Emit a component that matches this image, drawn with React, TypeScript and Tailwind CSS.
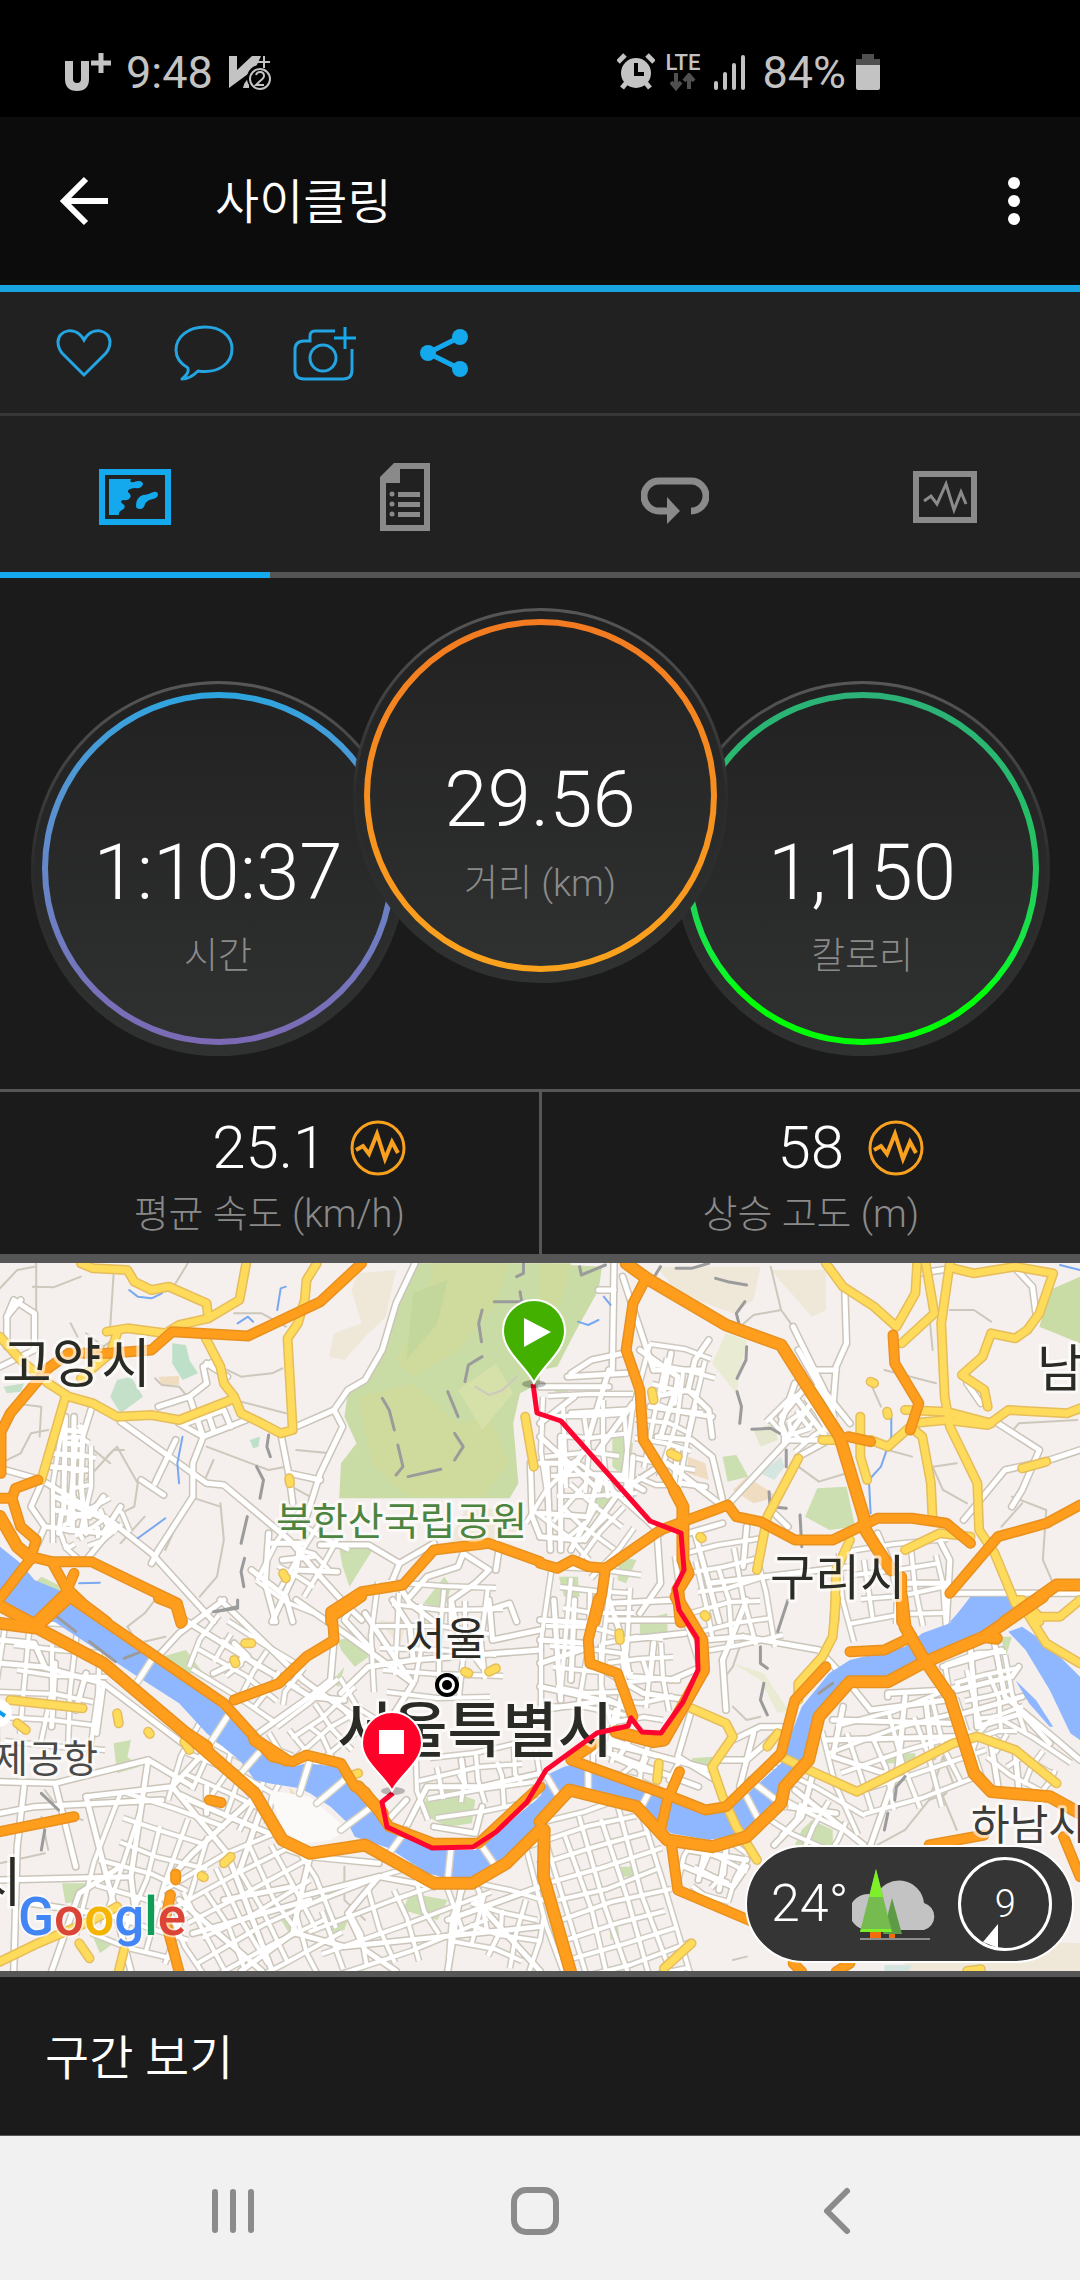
import React from "react";

/* ------------------------------------------------------------------ */
/* Map data                                                            */
/* ------------------------------------------------------------------ */

type Tile = {
  x: number;
  y: number;
  land: [string, string][];
  water: string[];
  island: string[];
  lanes: string[];
  streets: string[];
  bridges: string[];
  arterials: string[];
  highways: string[];
  trunks: string[];
  borders: string[];
  streams: string[];
};

const PARK = "#c9dca6";
const PARK_2 = "#cfdb9c";
const GREEN = "#cbdfb0";
const TAN = "#efe8d9";
const SAND = "#f0dcc0";

const tiles: Tile[] = [
  {
    x: 0,
    y: 1250,
    land: [
      [TAN, "1040,70 1150,60 1120,200 1060,260 1000,330 955,320 970,250 1050,220 1020,120"],
      [PARK, "1205,40 1568,40 1568,400 1510,430 1490,520 1505,700 1480,745 985,745 990,640 1035,580 1000,500 1010,430 1060,400 1110,300 1150,160"],
      [PARK_2, "1260,40 1480,40 1440,160 1330,300 1200,380 1150,330 1230,180"],
      [PARK_2, "1040,440 1200,400 1330,520 1420,500 1480,640 1400,740 1180,740 1080,640"],
      ["#c3d79c", "1200,130 1300,90 1270,220 1180,330"],
      ["#d6e0a9", "1330,420 1440,340 1490,430 1400,540"],
      ["#bfe0c8", "500,280 540,285 550,330 575,370 530,390 500,340"],
      ["#c4e0c9", "340,390 380,380 415,440 350,490 320,440"],
      ["#bfe0c8", "725,570 755,560 750,590 735,595"],
      ["#c4e0c9", "10,410 70,400 60,425 20,430"],
      [SAND, "460,380 520,378 520,405 470,405"],
      [GREEN, "985,895 1085,895 1045,960 1015,1010 995,950"],
      [GREEN, "1290,980 1310,1010 1290,1080 1230,1060"],
      [GREEN, "120,980 180,1010 170,1040 100,1000"],
      [TAN, "1350,780 1510,770 1500,860 1300,880"],
    ],
    water: ["0,890 60,940 100,990 170,1020 240,1060 310,1115 60,1115 0,1050"],
    island: [],
    lanes: [
      "105,40 105,190", "95,110 155,112 235,80", "545,40 510,100", "330,70 320,230",
      "0,115 50,60 100,50", "450,385 470,405 520,410 560,460", "640,350 700,380 790,370 820,355",
      "700,455 830,490", "600,590 780,660 830,650", "310,620 340,590 400,700 390,770 350,790",
      "205,220 225,260", "640,760 650,870 630,980 580,1040", "480,900 550,740 640,770",
      "680,190 760,190 830,230", "860,600 960,610 990,560", "0,640 60,610 90,550 140,540",
      "250,690 330,600 360,600", "1380,410 1420,435 1460,420 1500,380", "620,630 590,700",
      "420,800 350,880", "830,640 830,700 900,740", "40,460 120,470 115,560",
      "250,250 300,290 340,260", "260,590 320,640",
    ],
    streets: [
      "1205,40 1150,160 1110,300 1060,390 1010,420 970,480 860,530", "970,480 995,530 930,670 890,800",
      "350,515 600,700 650,705 840,870 930,980 1000,1060 1050,1110", "520,520 590,560 715,510",
      "590,560 560,640 560,740 460,900", "510,570 450,700", "410,690 475,735",
      "815,550 840,680 850,760", "840,670 930,690", "120,690 330,820 440,910 620,1115",
      "330,830 250,930", "460,900 440,940", "0,655 120,690", "0,350 100,300 100,190 40,150 20,200 20,290",
      "20,200 60,150", "270,460 240,560 235,700", "930,885 1070,885 1160,940 1260,880",
      "1160,940 1140,990", "780,850 770,1000 800,1115", "870,890 860,960 980,965",
      "730,960 830,1040 850,1115", "1160,1010 1190,1060 1260,1115",
      "1190,1040 1240,980 1330,950 1345,910", "1345,910 1420,960 1380,1000 1310,1050 1310,1115",
      "1540,640 1545,800 1568,860", "120,700 90,770 130,830 110,880", "630,330 590,350 600,400 550,440 460,470",
      "550,440 590,560", "540,520 650,480 670,530", "600,480 620,540", "600,340 660,380",
      "880,880 780,880", "820,930 910,920", "860,960 790,1115", "130,830 300,850 350,770",
      "160,780 260,800 300,740", "190,500 185,780", "215,500 210,840", "150,610 240,620", "150,650 250,660",
      "190,540 240,545", "190,580 240,585", "235,700 250,850", "160,740 330,820", "180,780 170,850",
      "1420,1080 1480,1060 1500,1115", "1440,960 1450,890",
    ],
    bridges: [],
    arterials: [
      "235,40 270,55 370,60 390,95 440,120 490,110 600,160 605,205",
      "715,40 695,150 605,205 520,225 480,250 370,235 310,245",
      "920,40 890,90 885,150 865,220 835,265 850,540 815,550 760,520 700,490 680,440 650,400 640,350 605,280 590,250",
      "0,260 60,330 140,400 200,440 270,460 340,500 440,495 520,510 670,450",
      "190,440 120,690", "340,250 320,310", "1525,500 1550,650", "235,385 320,310", "822,970 830,985", "840,685 842,700",
    ],
    highways: [
      "1050,40 930,155 720,258 500,245 440,300 320,310 200,310 140,355 30,490 3,545 3,670",
      "0,745 35,745 45,715 110,690", "35,745 60,830 105,870 90,920",
      "90,920 150,935 265,935 515,1060 530,1115", "90,925 0,1045",
      "150,935 190,1010 240,1060 310,1115", "215,970 190,1030 105,1115", "0,1065 90,1115",
      "960,1115 960,1085 1050,1025 1170,1005 1260,900 1420,880 1568,935",
    ],
    trunks: ["0,800 50,890 90,925"],
    borders: [
      "1110,445 1130,480 1145,540", "1155,585 1170,650 1150,675", "1185,680 1280,658",
      "1400,180 1390,220 1398,275", "1400,320 1360,345 1350,395", "1300,425 1330,500",
      "1320,550 1345,590 1320,630", "1435,155 1515,155 1510,125", "1520,40 1520,70 1500,80",
      "780,555 775,590 785,620", "745,650 765,690 755,745", "718,800 700,880",
      "710,925 700,965 708,1010", "620,1085 690,1075 690,1050",
    ],
    streams: ["375,120 400,140 440,145 470,130", "805,180 815,115 830,110", "530,560 515,640 520,700", "400,865 480,805", "690,220 720,200 735,215", "230,1000 290,998"],
  },
  {
    x: 540,
    y: 1250,
    land: [
      [PARK, "0,40 180,50 170,120 100,250 50,350 0,360"],
      [PARK_2, "0,40 90,40 60,160 0,200"],
      [GREEN, "210,550 270,580 260,690 210,650"],
      [GREEN, "130,740 210,700 200,770 150,800"],
      [GREEN, "530,620 570,615 605,680 545,695"],
      [GREEN, "805,715 890,710 915,830 840,840 770,800"],
      [PARK, "1480,120 1568,80 1568,280 1450,230"],
      [TAN, "340,50 640,50 620,150 560,190 400,130"],
      ["#e9ecd3", "540,250 600,270 570,430 500,340"],
      [TAN, "670,60 830,60 830,180 790,200"],
      [SAND, "600,680 690,740 620,760 560,720"],
      [SAND, "430,620 480,640 490,690 430,670"],
      ["#d5e6e0", "700,620 710,650 680,690 640,670"],
      [GREEN, "230,920 280,930 250,1000 225,990"],
      [GREEN, "55,980 110,980 115,1040 70,1040"],
      ["#e5e6ce", "620,540 680,520 690,570 640,590"],
      [GREEN, "40,420 80,420 80,460"],
    ],
    water: ["1250,1050 1350,1060 1400,1070 1330,1115 1190,1115"],
    island: [],
    lanes: [
      "670,50 700,180 735,230", "700,180 620,195 570,240", "750,650 810,695 890,670",
      "1140,650 1210,640", "1140,650 1170,720 1240,760", "1370,740 1470,780 1460,930 1490,1000",
      "1190,180 1260,180 1310,215", "1130,190 1140,300", "1000,360 1150,400", "960,400 990,470",
      "1560,510 1390,520 1370,545", "1340,830 1400,760", "1010,600 1080,620", "700,520 680,480",
    ],
    streets: [
      "885,120 890,280 860,350 850,480", "735,230 830,430 900,520", "740,400 700,520 720,570 880,570",
      "720,570 540,770", "750,620 830,575", "215,40 210,360", "240,80 330,360", "0,410 200,410",
      "80,380 250,370", "200,360 130,600 60,700", "240,310 150,330 90,370", "490,270 450,330 430,420 330,440",
      "430,420 490,480 500,560", "340,560 440,570 500,620 530,750", "400,600 390,700",
      "0,560 170,720 180,680 250,690 300,720", "0,640 110,640", "60,560 60,900", "20,640 30,900",
      "170,680 140,800 0,790", "200,700 220,740 130,870", "240,720 330,660", "450,850 490,1000 520,1115",
      "600,830 590,950", "490,1000 900,950", "1330,520 1450,600 1400,720 1370,770",
      "1568,600 1480,630 1350,660 1230,810", "1380,55 1430,110 1440,190", "1240,400 1280,460",
      "1160,870 1190,930 1180,1115", "1180,1030 1568,1030", "980,850 1040,1000 1180,1000",
      "170,120 215,120", "750,300 850,480", "780,400 700,500", "800,440 720,560", "740,440 830,560",
      "860,360 800,360", "1100,70 1200,55", "90,490 250,480", "270,460 170,600", "0,520 100,440",
      "290,300 400,380 390,460", "380,310 360,420", "320,470 500,500", "400,400 350,560",
      "450,470 430,560", "330,360 470,360", "370,640 470,720 520,760", "410,700 480,710",
      "270,620 260,760 350,850", "0,860 120,870 190,800", "90,900 130,820", "340,850 350,1000 290,1090",
      "430,850 530,820", "670,780 720,830", "200,1060 400,1050",
    ],
    bridges: [],
    arterials: [
      "830,40 880,110 970,170 1035,230 1090,130 1095,40", "1120,40 1145,190 1050,280",
      "1190,40 1165,220 1175,440 1190,530 1270,700 1275,840 1320,910 1380,1060 1450,1115",
      "1200,55 1260,70 1380,50 1490,70 1450,190 1415,240 1380,265 1310,250 1285,320 1225,375 1290,420 1300,470",
      "1080,520 1180,510 1300,525 1360,480 1530,490 1568,475", "1060,480 1180,485 1310,520",
      "960,570 1010,590 1075,530 1110,560 1135,700 1140,810", "930,500 930,620 950,690",
      "750,625 660,800 630,960", "900,870 860,960 855,1115", "1060,900 1160,850 1250,860",
      "325,425 330,450", "380,610 400,620", "960,395 970,400", "1008,485 1010,495", "820,570 860,570", "1400,655 1470,635",
      "465,860 470,865",
    ],
    highways: [
      "305,90 270,160 250,300 290,420 300,570 390,720",
      "0,940 50,955 95,930 140,950 190,955 350,840 520,775 545,765 570,800 640,815 740,870 850,870 940,825 980,805 1080,805 1180,820 1250,880",
      "190,955 180,1030 160,1115", "1025,255 1030,340 1100,460 1075,540", "895,560 960,575",
      "1190,1030 1330,860 1470,820 1568,765", "1050,980 1050,1115",
    ],
    trunks: [
      "250,40 310,85 540,225 700,285 770,400 870,560 940,800 945,840 975,890 1020,960",
      "390,720 415,770 415,930 430,970 400,1020 410,1115", "1568,1005 1500,1005 1350,1115",
    ],
    borders: [
      "115,50 120,75 190,45", "395,55 440,55 490,40", "510,85 545,95 600,105", "595,155 570,190 580,230",
      "600,290 598,330 572,385", "572,425 585,470 580,520", "615,538 670,535 695,550", "715,600 715,650",
      "755,795 760,890", "350,50 335,75", "665,725 668,770 715,775",
    ],
    streams: ["1020,500 1020,560 990,650 955,690 960,790", "185,140 205,165", "110,215 140,225 170,210", "1510,45 1568,60"],
  },
  {
    x: 0,
    y: 1600,
    land: [
      [GREEN, "980,120 1040,110 1070,170 1030,200 990,150"],
      [GREEN, "470,170 540,150 590,220 530,220"],
      [GREEN, "1240,590 1300,570 1380,600 1370,670 1300,680 1220,640"],
      [GREEN, "330,430 380,420 370,470 405,500 340,520"],
      [GREEN, "180,850 260,850 250,900 190,910"],
      [GREEN, "1190,880 1300,900 1270,960 1170,930"],
      [GREEN, "970,950 1010,960 1000,990 960,1000"],
      [GREEN, "810,950 870,950 840,1000"],
      [GREEN, "270,1010 330,1030 290,1060"],
      [GREEN, "960,250 1000,200 985,260"],
      [GREEN, "1240,0 1290,0 1270,40"],
      [TAN, "1100,60 1180,70 1160,140"],
      [SAND, "840,560 870,600 850,620"],
    ],
    water: [
      "60,0 200,0 250,30 560,240 780,470 850,500 890,490 980,500 1030,570 1060,590 1120,690 1260,750 1380,750 1450,690 1568,590 1568,680 1460,780 1370,830 1300,835 1240,820 1130,745 1030,710 1010,670 960,620 900,580 870,565 780,550 740,540 700,485 600,400 520,310 400,230 150,60",
    ],
    island: ["780,570 900,590 1010,690 960,720 880,730 820,690"],
    lanes: [
      "370,80 420,40 450,0", "370,80 400,130 480,110", "0,790 130,760", "130,570 180,640 240,660",
      "1000,800 1000,900 1060,960", "120,650 140,750",
    ],
    streets: [
      "530,430 300,250 120,200 0,190", "0,545 160,550 430,480 560,560", "0,840 380,830",
      "70,560 50,740 40,1113", "600,450 500,560 250,590", "520,50 900,290 1000,300",
      "640,0 880,240 960,300 1030,350", "860,0 1000,100 1200,250 1120,380",
      "990,280 1070,200 1200,180 1568,150", "1060,40 1190,240", "840,750 900,770 1100,790",
      "1170,700 1240,560 1400,560 1568,520", "1340,480 1350,560", "440,190 520,100 650,0",
      "1030,0 1000,60 1080,150", "750,400 900,290 960,240 970,120", "680,130 720,170 620,220",
      "1200,180 1190,80 1140,0", "1310,0 1330,100 1400,200", "1420,0 1430,120 1568,90",
      "160,190 150,380", "250,220 220,330", "300,250 280,400", "0,120 100,130 130,200",
      "430,480 380,830 400,1000", "250,590 380,1113", "160,550 220,800", "0,640 100,620 470,600",
      "500,560 660,760 790,1113", "640,480 760,620 700,800", "740,590 560,760 480,850",
      "550,600 780,700", "600,640 600,560", "900,770 870,900 850,1000 700,1113",
      "870,890 1100,830 1260,860", "1100,830 1010,940 1060,1050 1150,1113",
      "1340,860 1300,1113", "1300,960 1568,860", "860,1000 1000,1040 1568,980", "520,900 760,1113",
      "650,900 850,860", "560,1000 900,900", "1380,900 1568,1113", "1180,600 1090,700",
      "1260,680 1380,700 1400,620", "90,910 400,960", "150,1113 230,880 350,800",
    ],
    bridges: [
      "440,180 390,260", "660,350 610,430", "750,460 700,520", "900,480 870,580", "1000,540 920,610",
      "1080,620 990,690", "1180,690 1130,760", "1310,740 1300,840", "1400,740 1440,800",
    ],
    arterials: [
      "30,300 240,325", "0,1085 110,1030 270,960 340,920", "230,1030 260,1075", "360,1050 345,1113",
      "535,425 550,450", "340,340 345,370", "712,130 730,130", "650,790 670,770", "1350,215 1360,220",
      "1420,215 1440,205", "1010,530 1040,520", "50,370 75,390", "680,180 684,190", "430,395 435,402", "585,828 592,832",
    ],
    highways: [
      "1050,-10 965,50 970,120 890,170 810,250 680,300", "460,-5 510,15 525,70", "0,695 215,650",
      "608,600 642,608", "510,822 510,840", "495,885 480,960 520,1115", "0,20 110,80 205,-10",
      "200,-10 650,310 790,470 850,485 890,465 990,490 1030,560 1060,575 1130,680 1260,730 1390,730 1520,605 1568,560",
    ],
    trunks: [
      "0,70 110,85 300,190 540,400 740,580 820,720 900,760 1060,735 1260,850 1370,850 1470,790 1568,690",
      "540,400 600,440", "740,420 830,480", "1040,560 1110,640",
    ],
    borders: ["165,50 220,95", "260,125 335,185", "360,175 410,155", "120,580 170,630", "625,35 690,20", "130,690 120,750"],
    streams: [],
  },
  {
    x: 540,
    y: 1600,
    land: [
      [GREEN, "740,735 760,690 790,660 850,690 850,735"],
      [GREEN, "1000,460 1090,460 1090,490 1000,490"],
      [GREEN, "235,800 270,800 275,830 240,830"],
      [GREEN, "440,475 500,470 500,505 450,510"],
      [GREEN, "1340,110 1370,110 1350,180"],
      [GREEN, "290,60 370,40 370,120 290,110"],
      [GREEN, "1070,370 1110,370 1100,400"],
      [GREEN, "200,970 225,970 230,1010 205,1020"],
      ["#e9ecd3", "560,190 650,220 720,330 690,340 640,240"],
      [TAN, "1060,1060 1300,1020 1568,1030 1568,1115 1060,1115"],
      ["#d5e6e0", "1000,1095 1080,1095 1070,1115 1000,1115"],
    ],
    water: [
      "0,590 30,520 70,500 110,490 380,600 480,640 550,630 700,490 730,400 760,320 840,220 900,180 1060,140 1110,100 1190,70 1250,-10 1390,-10 1340,60 1280,100 1110,180 1010,230 900,230 820,320 780,460 700,560 690,610 600,700 490,720 380,700 280,610 80,560 0,640",
      "1360,95 1400,80 1470,130 1568,230 1568,420 1540,400 1480,270 1410,150",
      "1380,240 1440,300 1490,380 1480,380 1420,310",
    ],
    island: [],
    lanes: [
      "1170,470 1130,600 1060,690", "1170,470 1200,550 1170,590 1210,690", "560,320 600,360 640,350",
      "530,240 560,200 590,110", "1060,690 980,735", "1130,600 1180,580",
      "560,1080 600,1070",
    ],
    streets: [
      "590,110 810,150 890,240 960,330", "530,180 540,330", "600,0 530,180", "470,120 590,110",
      "960,330 1180,300", "880,320 850,470 1000,520", "1060,290 1040,500 960,735", "1120,300 1140,470",
      "1010,290 1010,280 1180,270", "850,360 1190,370", "830,420 1200,410", "790,530 760,650 680,735",
      "740,570 940,735", "720,620 860,640", "1170,200 1340,150", "1210,270 1370,230 1390,200",
      "1230,340 1400,290", "1250,150 1270,380", "1320,130 1350,290 1500,420 1568,480",
      "1310,430 1330,560", "1380,450 1390,570", "1270,380 1400,340 1480,430", "0,60 150,70",
      "0,120 130,130", "0,190 120,150", "0,260 220,310", "40,0 60,300", "100,0 90,240", "0,330 200,300 260,330",
      "200,0 240,120 420,100", "240,120 260,230 400,240", "200,60 400,60", "330,130 320,230",
      "150,190 300,280 430,300", "220,330 200,460 460,560", "270,400 230,470", "320,420 290,510",
      "440,330 400,470 510,540", "200,430 500,510", "560,420 640,380 700,380", "520,480 600,480 690,400",
      "620,400 580,560", "380,240 470,200", "430,750 600,780", "420,800 560,860 600,800",
      "480,750 460,840", "540,750 520,870",
    ],
    bridges: ["140,510 140,570", "20,530 60,600", "320,570 290,630", "610,540 710,620", "600,590 630,650"],
    arterials: [
      "860,-5 850,110 820,170 750,250 750,300", "440,325 540,370 560,410 500,500 530,590 570,680 630,780",
      "700,470 780,510 920,575 1010,530 1200,430 1270,410 1380,450 1500,550", "1390,0 1470,130 1568,190",
      "1400,0 1450,50 1510,50 1568,0", "690,400 660,440", "345,490 340,540", "440,1030 360,1105",
      "230,100 232,120", "478,45 482,50", "1240,1113 1280,1108",
    ],
    highways: [
      "170,-5 140,120 145,190 225,220 270,350", "405,515 370,600 350,690", "380,720 400,870 640,975",
      "900,155 1000,150 1080,110", "90,480 370,585 480,630 540,620 700,460 740,300 830,200",
      "1130,735 1290,705", "1520,710 1568,830", "735,1090 760,1115", "860,1115 900,1090", "90,480 160,430",
    ],
    trunks: [
      "395,-10 470,120 475,210 360,420 330,425 220,395",
      "0,665 85,570 280,620 370,720 500,740 600,710 700,610 710,560 780,480 810,350 900,245 1010,245 1110,190 1290,110 1460,-10",
      "1290,110 1325,115", "1050,-10 1060,80 1110,170 1190,290 1260,520 1310,575 1480,590 1568,640",
      "12,690 10,830 90,1120",
    ],
    borders: ["640,140 640,190 660,205", "650,250 640,300 660,345", "720,0 690,95", "1060,530 1035,560 1030,600", "1010,640 1000,690", "810,280 850,250"],
    streams: [],
  },
];

/* Blocks of narrow streets: centre, size, turn in degrees, spacing. */
type Block = [number, number, number, number, number, number];
const blocks: Block[] = [
  [612, 1905, 130, 200, -17, 20],
  [75, 1485, 36, 120, 6, 15],
  [95, 1530, 60, 40, -32, 15],
  [255, 1910, 150, 120, -28, 20],
  [150, 1880, 110, 150, 18, 24],
  [235, 1780, 110, 90, 24, 20],
  [55, 1690, 110, 130, 5, 24],
  [400, 1920, 190, 90, -20, 25],
  [500, 1930, 90, 80, 14, 21],
  [330, 1730, 100, 70, -38, 18],
  [250, 1670, 110, 60, 32, 20],
  [440, 1640, 130, 110, 3, 22],
  [590, 1645, 90, 150, 5, 20],
  [480, 1780, 120, 60, -10, 20],
  [640, 1680, 70, 80, -6, 20],
  [590, 1450, 90, 110, -2, 20],
  [670, 1420, 70, 140, 12, 19],
  [585, 1520, 90, 80, 40, 22],
  [730, 1600, 90, 110, -12, 20],
  [640, 1770, 90, 40, 18, 16],
  [803, 1422, 46, 60, 55, 14],
  [910, 1760, 150, 110, -18, 23],
  [990, 1700, 70, 90, -14, 20],
  [1020, 1760, 90, 50, 32, 20],
  [900, 1590, 110, 90, -8, 24],
  [800, 1820, 110, 70, 28, 24],
  [715, 1870, 60, 60, 24, 18],
  [310, 1560, 90, 70, -60, 24],
];

function blockLines([cx, cy, w, h, turn, gap]: Block): string[] {
  const rad = (turn * Math.PI) / 180;
  const c = Math.cos(rad);
  const s = Math.sin(rad);
  const at = (u: number, v: number) =>
    `${Math.round(cx + u * c - v * s)},${Math.round(cy + u * s + v * c)}`;
  const out: string[] = [];
  let i = 0;
  for (let u = -w / 2; u <= w / 2; u += gap) {
    const k = (i * 7) % 5;
    out.push(`${at(u, -h / 2 + k * 5)} ${at(u + k * 2 - 4, 0)} ${at(u + 2 - k, h / 2 - ((i * 3) % 4) * 6)}`);
    i += 1;
  }
  for (let v = -h / 2; v <= h / 2; v += gap) {
    const k = (i * 5) % 4;
    out.push(`${at(-w / 2 + k * 5, v)} ${at(0, v + k * 2 - 3)} ${at(w / 2 - ((i * 3) % 5) * 4, v + 2 - k)}`);
    i += 1;
  }
  return out;
}

const blockPaths = blocks.flatMap(blockLines);

const ROUTE =
  "533,1384 537,1413 561,1421 650,1521 681,1533 684,1570 675,1588 679,1610 697,1638 698,1670 683,1702 661,1733 642,1732 631,1718 628,1726 597,1733 546,1770 527,1802 496,1832 473,1847 432,1848 387,1827 382,1802 393,1793";

type LineKey = "lanes" | "streets" | "bridges" | "arterials" | "highways" | "trunks" | "borders" | "streams";

function Lines({ kind, color, width }: { kind: LineKey; color: string; width: number }) {
  return (
    <g fill="none" stroke={color} strokeWidth={width} strokeLinecap="round" strokeLinejoin="round">
      {tiles.map((t) => (
        <g key={`${t.x}-${t.y}`} transform={`translate(${t.x} ${t.y}) scale(0.3444 0.3333)`}>
          {t[kind].map((p) => (
            <polyline key={p} points={p} vectorEffect="non-scaling-stroke" />
          ))}
        </g>
      ))}
    </g>
  );
}

function Areas({ pick }: { pick: (t: Tile) => [string, string][] }) {
  return (
    <g>
      {tiles.map((t) => (
        <g key={`${t.x}-${t.y}`} transform={`translate(${t.x} ${t.y}) scale(0.3444 0.3333)`}>
          {pick(t).map(([fill, p]) => (
            <polygon key={p} points={p} fill={fill} />
          ))}
        </g>
      ))}
    </g>
  );
}

function Place({
  x,
  y,
  size,
  weight = 400,
  color = "#2b2b26",
  halo = 6,
  children,
}: {
  x: number;
  y: number;
  size: number;
  weight?: number;
  color?: string;
  halo?: number;
  children: string;
}) {
  return (
    <text
      x={x}
      y={y}
      fontSize={size}
      fontWeight={weight}
      fill={color}
      stroke="#ffffff"
      strokeOpacity={0.65}
      strokeWidth={halo}
      strokeLinejoin="round"
      paintOrder="stroke"
    >
      {children}
    </text>
  );
}

function RouteMap() {
  return (
    <svg viewBox="0 1263 1080 708" className="block h-auto w-full font-['Noto_Sans_CJK_KR',sans-serif]" role="img" aria-label="서울 라이딩 경로 지도">
      <rect x="0" y="1263" width="1080" height="708" fill="#f5efee" />
      <Areas pick={(t) => t.land} />
      <Lines kind="lanes" color="#cdc8bc" width={2} />
      <g fill="none" stroke="#cfcabf" strokeWidth="7" strokeLinejoin="round">
        {blockPaths.map((p, i) => (
          <polyline key={i} points={p} />
        ))}
      </g>
      <Lines kind="streets" color="#cbc5b9" width={8} />
      <g fill="none" stroke="#ffffff" strokeWidth="4" strokeLinejoin="round">
        {blockPaths.map((p, i) => (
          <polyline key={i} points={p} />
        ))}
      </g>
      <Lines kind="streets" color="#ffffff" width={5} />
      <Areas pick={(t) => t.water.map((p): [string, string] => ["#8fb7ff", p])} />
      <Areas pick={(t) => t.island.map((p): [string, string] => ["#fbfaf8", p])} />
      <Lines kind="streams" color="#78a9f0" width={2} />
      <Lines kind="borders" color="#9b9b9b" width={3} />
      <Lines kind="bridges" color="#d5d0c4" width={8} />
      <Lines kind="bridges" color="#ffffff" width={5} />
      <Lines kind="arterials" color="#e6bd5b" width={10} />
      <Lines kind="arterials" color="#ffdb5c" width={7} />
      <Lines kind="highways" color="#e8911f" width={11} />
      <Lines kind="trunks" color="#e8911f" width={13} />
      <Lines kind="highways" color="#ff9d1c" width={8} />
      <Lines kind="trunks" color="#ff9d1c" width={10} />

      <circle cx="-2" cy="1713" r="14" fill="#ffffff" />
      <path d="M-4 1710 L5 1716" stroke="#0d9bf0" strokeWidth="4" fill="none" />

      <Place x={2} y={1383} size={54}>고양시</Place>
      <Place x={1037} y={1387} size={51}>남</Place>
      <Place x={276} y={1535} size={39} color="#4c8440">북한산국립공원</Place>
      <Place x={770} y={1595} size={49}>구리시</Place>
      <Place x={405} y={1655} size={44}>서울</Place>
      <Place x={337} y={1752} size={60} weight={500}>서울특별시</Place>
      <Place x={-7} y={1772} size={38} color="#4a4a48">제공항</Place>
      <Place x={-28} y={1902} size={54}>시</Place>
      <Place x={971} y={1840} size={42} color="#3c3c38">하남시</Place>

      <circle cx="447" cy="1685" r="10" fill="#ffffff" stroke="#000000" strokeWidth="4" />
      <circle cx="447" cy="1685" r="5" fill="#000000" />

      <polyline points={ROUTE} fill="none" stroke="#fe0531" strokeWidth="5" strokeLinejoin="round" />

      <ellipse cx="534" cy="1384" rx="12" ry="4" fill="#000000" opacity="0.25" />
      <path
        d="M534 1383 C526 1366 503 1352 503 1331 A31 31 0 0 1 565 1331 C565 1352 542 1366 534 1383Z"
        fill="#43b000"
        stroke="#ffffff"
        strokeWidth="2"
      />
      <path d="M524 1318 L551 1332 L524 1347Z" fill="#ffffff" />

      <ellipse cx="393" cy="1791" rx="12" ry="4" fill="#000000" opacity="0.25" />
      <path
        d="M392 1791 C384 1775 362 1762 362 1743 A30 31 0 0 1 422 1743 C422 1762 400 1775 392 1791Z"
        fill="#fe0129"
        stroke="#ffffff"
        strokeWidth="2"
      />
      <rect x="379" y="1730" width="25" height="24" fill="#ffffff" />

      <text
        x="18"
        y="1935"
        fontSize="53"
        fontWeight="500"
        className="font-['Roboto',sans-serif]"
        stroke="#ffffff"
        strokeOpacity="0.6"
        strokeWidth="4"
        paintOrder="stroke"
      >
        <tspan fill="#4285f4">G</tspan>
        <tspan fill="#db4437">o</tspan>
        <tspan fill="#f4b400">o</tspan>
        <tspan fill="#4285f4">g</tspan>
        <tspan fill="#0f9d58">l</tspan>
        <tspan fill="#db4437">e</tspan>
      </text>
    </svg>
  );
}

/* ------------------------------------------------------------------ */
/* Status bar                                                          */
/* ------------------------------------------------------------------ */

function StatusBar() {
  return (
    <div className="flex h-[117px] items-center justify-between bg-black pt-[27px] pr-[200px] pl-16 text-[#c3c3c3]">
      <div className="flex items-center">
        <svg width="48" height="40" viewBox="0 0 48 40" aria-label="U+" role="img">
          <path d="M5 9 V27 Q5 35 13 35 Q21 35 21 27 V9" fill="none" stroke="currentColor" strokeWidth="8" />
          <path d="M27 11 H47 M37 1 V21" stroke="currentColor" strokeWidth="5" />
        </svg>
        <span className="ml-3.5 text-[45px] leading-none">9:48</span>
        <svg className="ml-4" width="44" height="40" viewBox="0 0 44 40" aria-hidden="true">
          <path d="M0 4 H8 V18 L23 4 H32 L27 15 L19 22 L0 36Z" fill="currentColor" />
          <path d="M14 36 Q15 30 20 26 V36Z" fill="currentColor" />
          <circle cx="31" cy="26" r="13" fill="#000" />
          <circle cx="31" cy="27" r="10" fill="none" stroke="currentColor" strokeWidth="2" />
          <path d="M27 23 Q28 20 31 20 Q35 20 35 24 Q35 26 31 29 L27 33 H35" fill="none" stroke="currentColor" strokeWidth="2" />
          <path d="M29 10 H41 M35 4 V16" stroke="currentColor" strokeWidth="2" />
        </svg>
      </div>
      <div className="flex items-center">
        <svg width="38" height="38" viewBox="0 0 38 38" aria-hidden="true">
          <path d="M1 9 L8 2 M37 9 L30 2" stroke="currentColor" strokeWidth="5" />
          <path d="M10 29 L5 35 M28 29 L33 35" stroke="currentColor" strokeWidth="5" />
          <circle cx="19" cy="20" r="15" fill="currentColor" />
          <path d="M19 10 V21 H27" stroke="#000" strokeWidth="4" fill="none" />
        </svg>
        <div className="ml-2.5 flex flex-col items-center">
          <span className="text-[22px] leading-5 font-medium">LTE</span>
          <svg width="26" height="18" viewBox="0 0 26 18" aria-hidden="true">
            <path d="M6 0 V14 M1 9 L6 15 L11 9" fill="none" stroke="#505050" strokeWidth="4" />
            <path d="M19 16 V3 M14 8 L19 2 L24 8" fill="none" stroke="#505050" strokeWidth="4" />
          </svg>
        </div>
        <svg className="ml-3.5" width="32" height="36" viewBox="0 0 32 36" aria-hidden="true">
          <path d="M2 29 V34 M11 20 V34 M20 11 V34 M29 3 V34" stroke="currentColor" strokeWidth="4" strokeLinecap="round" />
        </svg>
        <span className="ml-4 text-[45px] leading-none">84%</span>
        <svg className="ml-2.5" width="24" height="38" viewBox="0 0 24 38" aria-hidden="true">
          <path d="M6 1 H18 V6 H24 V12 H0 V6 H6Z" fill="#4f4f4f" />
          <path d="M0 12 H24 V35 Q24 37 22 37 H2 Q0 37 0 35Z" fill="currentColor" />
        </svg>
      </div>
    </div>
  );
}

/* ------------------------------------------------------------------ */
/* Action and tab icons                                                */
/* ------------------------------------------------------------------ */

function HeartIcon() {
  return (
    <svg width="56" height="50" viewBox="0 0 56 50" aria-hidden="true">
      <path
        d="M28 47 L6 25 Q2 20 2 14 C2 2 20 -3 28 12 C36 -3 54 2 54 14 Q54 20 50 25Z"
        fill="none"
        stroke="#24a4e0"
        strokeWidth="3"
      />
    </svg>
  );
}

function CommentIcon() {
  return (
    <svg width="60" height="56" viewBox="0 0 60 56" aria-hidden="true">
      <path
        d="M24 46 C45 49 58 38 58 24 C58 10 46 2 31 2 C14 2 2 12 2 25 C2 33 7 39 14 43 C15 47 12 51 8 54 C14 54 19 51 24 46Z"
        fill="none"
        stroke="#24a4e0"
        strokeWidth="3"
        strokeLinejoin="round"
      />
    </svg>
  );
}

function CameraIcon() {
  return (
    <svg width="64" height="56" viewBox="-1 -1 64 56" aria-hidden="true" fill="none" stroke="#24a4e0" strokeWidth="3">
      <path d="M42 5 H22 Q17 5 17 10 V15 H11 Q2 15 2 24 V44 Q2 53 11 53 H50 Q59 53 59 44 V23" />
      <circle cx="30" cy="32" r="13" />
      <path d="M41 12 H63 M52 1 V23" stroke="#14a8ec" />
    </svg>
  );
}

function ShareIcon() {
  return (
    <svg width="48" height="48" viewBox="0 0 48 48" aria-hidden="true" fill="#14a8ec">
      <path d="M8 24 L40 8 M8 24 L40 40" stroke="#14a8ec" strokeWidth="5" />
      <circle cx="8" cy="24" r="8" />
      <circle cx="40" cy="8" r="8" />
      <circle cx="40" cy="40" r="8" />
    </svg>
  );
}

function MapTabIcon() {
  return (
    <svg width="72" height="56" viewBox="0 0 72 56" aria-hidden="true">
      <rect x="3" y="3" width="66" height="50" fill="none" stroke="currentColor" strokeWidth="6" />
      <path
        d="M10 10 H32 Q30 14 35 13 Q43 10 44 15 Q43 20 36 19 Q28 20 29 23 Q33 26 31 29 Q29 32 24 31 Q20 32 24 35 Q28 38 23 41 Q19 43 20 46 H10Z"
        fill="currentColor"
      />
      <path
        d="M37 37 Q37 28 44 26 Q48 26 52 24 Q58 21 59 25 Q59 29 54 30 Q48 31 46 35 Q45 40 41 40 Q37 40 37 37Z"
        fill="currentColor"
      />
    </svg>
  );
}

function DetailTabIcon() {
  return (
    <svg width="50" height="68" viewBox="0 0 50 68" aria-hidden="true" fill="currentColor">
      <path d="M14 0 H50 V68 H0 V14Z M20 6 V20 H6 V62 H44 V6Z" fillRule="evenodd" />
      <circle cx="12" cy="31" r="2.5" />
      <circle cx="12" cy="41" r="2.5" />
      <circle cx="12" cy="51" r="2.5" />
      <path d="M18 29 H40 V34 H18Z M18 39 H40 V44 H18Z M18 49 H40 V54 H18Z" />
    </svg>
  );
}

function LapTabIcon() {
  return (
    <svg width="68" height="56" viewBox="0 -8 68 56" aria-hidden="true">
      <path d="M26 34 H18 A15 15 0 0 1 18 4 H50 A15 15 0 0 1 50 34" fill="none" stroke="currentColor" strokeWidth="7" />
      <path d="M26 20 L39 34 L26 47Z" fill="currentColor" />
    </svg>
  );
}

function ChartTabIcon() {
  return (
    <svg width="64" height="52" viewBox="0 0 64 52" aria-hidden="true" fill="none" stroke="currentColor">
      <rect x="3" y="3" width="58" height="46" strokeWidth="6" />
      <path d="M11 30 L18 25 L24 33 L33 13 L41 39 L48 21 L53 33" strokeWidth="3" strokeMiterlimit="10" />
    </svg>
  );
}

function PulseIcon() {
  return (
    <svg width="56" height="56" viewBox="0 0 56 56" aria-hidden="true" fill="none" stroke="#f9a11f">
      <circle cx="28" cy="28" r="26" strokeWidth="3" />
      <path d="M6 30 L13 26 L19 34 L27 14 L35 39 L42 22 L48 33" strokeWidth="4" strokeMiterlimit="10" />
    </svg>
  );
}

/* ------------------------------------------------------------------ */
/* Activity page                                                       */
/* ------------------------------------------------------------------ */

const actions = [
  { label: "좋아요", icon: <HeartIcon /> },
  { label: "댓글", icon: <CommentIcon /> },
  { label: "사진 추가", icon: <CameraIcon /> },
  { label: "공유", icon: <ShareIcon /> },
];

const tabs = [
  { label: "요약", icon: <MapTabIcon />, active: true },
  { label: "상세정보", icon: <DetailTabIcon />, active: false },
  { label: "랩", icon: <LapTabIcon />, active: false },
  { label: "차트", icon: <ChartTabIcon />, active: false },
];

function Gauge({ value, label, ring, className }: { value: string; label: string; ring: string; className: string }) {
  return (
    <div className={`size-[375px] shrink-0 rounded-full bg-linear-to-b from-[#575757] via-[#2b2b2b] to-[#303131] p-[3px] ${className}`}>
      <div className="size-full rounded-full bg-linear-to-b from-[#202020] to-[#303231] p-2">
        <div className={`size-full rounded-full bg-linear-to-b p-1.5 ${ring}`}>
          <div className="flex size-full flex-col items-center rounded-full bg-linear-to-b from-[#222222] to-[#2f3130] pt-[135px]">
            <span className="text-[78px] leading-[80px] font-light whitespace-nowrap text-white">{value}</span>
            <span className="mt-5 text-[37px] leading-[48px] font-light whitespace-nowrap text-[#8a8a8a]">{label}</span>
          </div>
        </div>
      </div>
    </div>
  );
}

function Metric({ value, label }: { value: string; label: string }) {
  return (
    <div className="flex flex-1 flex-col items-center pt-6">
      <div className="grid w-full grid-cols-[1fr_auto_1fr] items-center gap-x-6">
        <span className="col-start-2 text-[60px] leading-[64px] font-light text-white">{value}</span>
        <button type="button" aria-label={`${label} 차트`} className="justify-self-start">
          <PulseIcon />
        </button>
      </div>
      <span className="mt-2.5 text-[38px] leading-[48px] font-light text-[#8a8a8a]">{label}</span>
    </div>
  );
}

function Weather() {
  return (
    <div className="absolute right-1.5 bottom-2 flex h-[118px] w-[329px] items-center rounded-full border-2 border-white bg-[#353535] pl-6 text-white">
      <span className="text-[52px] leading-none font-light">24°</span>
      <svg className="ml-1" width="86" height="74" viewBox="0 0 86 74" aria-hidden="true">
        <path d="M16 63 A18 18 0 1 1 24 29 A25 25 0 0 1 72 36 A14 14 0 0 1 72 63Z" fill="#c3c3c3" />
        <path d="M8 72 H78" stroke="#8d8d8d" strokeWidth="2" />
        <path d="M18 64 H29 V71 H18Z M37 66 H43 V71 H37Z" fill="#f26c0d" />
        <path d="M40 31 L50 67 H31Z" fill="#5d9b47" />
        <path d="M24 2 L40 65 H8Z" fill="#76bb4f" />
        <path d="M24 2 L31 30 H17Z" fill="#7df02a" />
        <path d="M9 62 L8 65 H40 L39 62Z" fill="#7df02a" />
      </svg>
      <div className="relative ml-5 flex size-[94px] items-center justify-center rounded-full border-[3px] border-white">
        <span className="text-[38px] leading-none font-light">9</span>
        <svg className="absolute bottom-0 left-[22px]" width="16" height="24" viewBox="0 0 16 24" aria-hidden="true">
          <path d="M15 0 V24 L0 18Z" fill="#ffffff" />
        </svg>
      </div>
    </div>
  );
}

export default function App() {
  return (
    <div className="flex min-h-screen flex-col bg-[#1b1b1b] font-['Roboto','Noto_Sans_CJK_KR',sans-serif]">
      <StatusBar />

      <header className="flex h-[168px] items-center bg-[#0c0c0c] pr-12 pl-[60px] text-white">
        <button type="button" aria-label="뒤로">
          <svg width="48" height="50" viewBox="0 0 48 50" aria-hidden="true">
            <path d="M26 3 L4 25 L26 47 M4 25 H48" fill="none" stroke="currentColor" strokeWidth="6" />
          </svg>
        </button>
        <h1 className="ml-[107px] flex-1 pt-1 text-[48px] leading-none font-[350]">사이클링</h1>
        <button type="button" aria-label="메뉴" className="flex w-9 flex-col items-center gap-1.5">
          <span className="size-3 rounded-full bg-white" />
          <span className="size-3 rounded-full bg-white" />
          <span className="size-3 rounded-full bg-white" />
        </button>
      </header>

      <div className="flex h-[131px] items-center border-t-[7px] border-b-[3px] border-t-[#1aa3e1] border-b-[#373737] bg-[#212121] pl-6">
        {actions.map((a) => (
          <button key={a.label} type="button" aria-label={a.label} className="flex w-[120px] justify-center">
            {a.icon}
          </button>
        ))}
      </div>

      <div role="tablist" className="grid h-[162px] grid-cols-4 bg-[#212121]">
        {tabs.map((t) => (
          <button
            key={t.label}
            type="button"
            role="tab"
            aria-label={t.label}
            aria-selected={t.active}
            className={
              t.active
                ? "flex items-center justify-center border-b-[6px] border-[#14a8ec] pt-1.5 text-[#14a8ec]"
                : "flex items-center justify-center border-b-[6px] border-[#545454] pt-1.5 text-[#8a8a8a]"
            }
          >
            {t.icon}
          </button>
        ))}
      </div>

      <section className="flex h-[511px] items-start justify-center pt-[30px]">
        <Gauge value="1:10:37" label="시간" ring="from-[#2ba5df] to-[#7c69b4]" className="mt-[73px]" />
        <Gauge value="29.56" label="거리 (km)" ring="from-[#f27a21] to-[#faa31d]" className="z-10 -mx-[53px]" />
        <Gauge value="1,150" label="칼로리" ring="from-[#2cb178] via-[#22c55e] to-[#00ff06] to-85%" className="mt-[73px]" />
      </section>

      <section className="flex h-[174px] divide-x-[3px] divide-[#565656] border-t-[3px] border-b-[9px] border-[#565656]">
        <Metric value="25.1" label="평균 속도 (km/h)" />
        <Metric value="58" label="상승 고도 (m)" />
      </section>

      <section className="relative overflow-hidden border-b-[6px] border-[#565656]">
        <RouteMap />
        <Weather />
      </section>

      <button type="button" className="flex h-[159px] items-center border-b border-[#565656] pt-1.5 pl-[45px] text-left text-[48px] leading-none font-[350] text-white">
        구간 보기
      </button>

      <nav className="flex flex-1 items-center justify-between bg-[#f1f1f1] pt-1.5 pr-[211px] pl-[201px] text-[#8b8b8b]">
        <button type="button" aria-label="최근 앱" className="flex w-16 justify-center">
          <svg width="42" height="50" viewBox="0 0 42 50" aria-hidden="true">
            <path d="M3 6 V44 M21 6 V44 M39 6 V44" stroke="currentColor" strokeWidth="6" strokeLinecap="round" />
          </svg>
        </button>
        <button type="button" aria-label="홈" className="flex w-16 justify-center">
          <svg width="50" height="50" viewBox="0 0 50 50" aria-hidden="true">
            <rect x="4" y="4" width="42" height="42" rx="12" fill="none" stroke="currentColor" strokeWidth="6" />
          </svg>
        </button>
        <button type="button" aria-label="뒤로 가기" className="flex w-16 justify-center">
          <svg width="30" height="50" viewBox="0 0 30 50" aria-hidden="true">
            <path d="M25 5 L5 25 L25 45" fill="none" stroke="currentColor" strokeWidth="6" strokeLinecap="round" strokeLinejoin="round" />
          </svg>
        </button>
      </nav>
    </div>
  );
}
